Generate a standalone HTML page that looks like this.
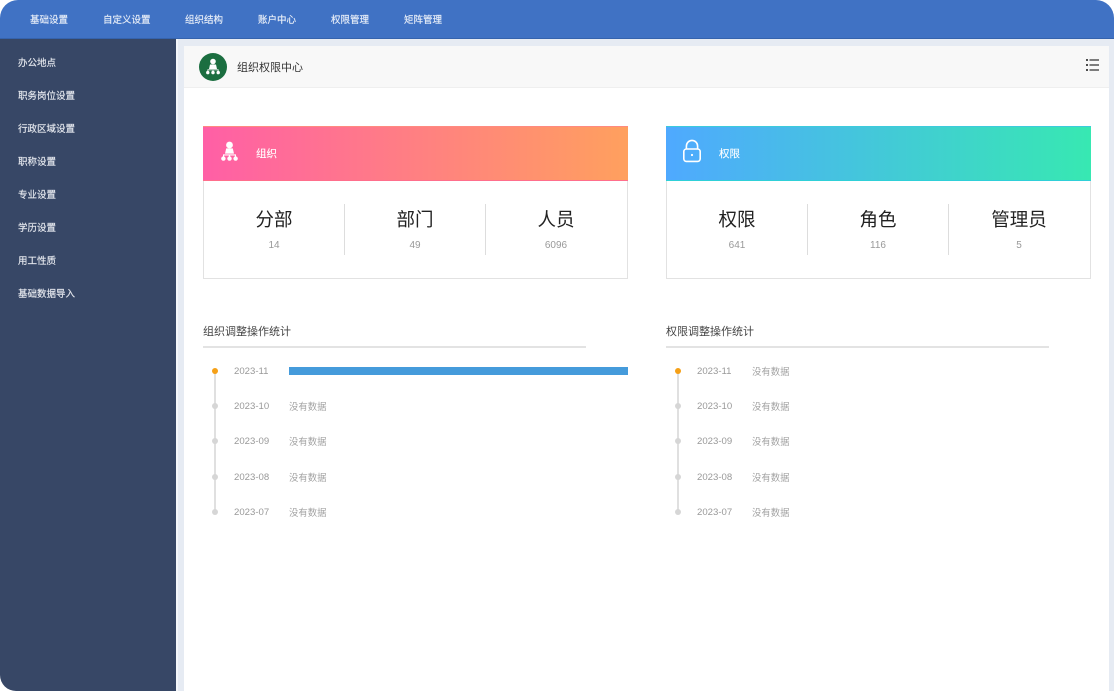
<!DOCTYPE html>
<html lang="zh"><head><meta charset="utf-8"><title>组织权限中心</title>
<style>
*{box-sizing:border-box;margin:0;padding:0}
html,body{width:1114px;height:691px;overflow:hidden;background:#fff;font-family:"Liberation Sans","Noto Sans CJK SC",sans-serif}
.a{position:absolute;white-space:nowrap}
#page{position:relative;width:1114px;height:691px;overflow:hidden;background:#fff}
#bg{left:178px;top:38px;width:936px;height:653px;background:#e6ebf3}
#top{left:0;top:0;width:1114px;height:39px;background:#4072c4;border-bottom:1px solid #3563ad;border-radius:18px 18px 0 0}
#side{left:0;top:38px;width:176px;height:653px;background:#374766;border-radius:0 0 0 16px}
#cw{left:176px;top:39px;width:2px;height:652px;background:#f4f6fa}
#main{left:184px;top:46px;width:925px;height:645px;background:#fff}
#head{left:184px;top:46px;width:925px;height:42px;background:#f8f8f8;border-bottom:1px solid #efefef}
.n{top:13.5px;font-size:9.5px;line-height:13px;color:#e8eef8;-webkit-text-stroke:.15px #e8eef8}
.s{left:18px;font-size:9.5px;line-height:13px;color:#e6e9ef;-webkit-text-stroke:.15px #e6e9ef}
.card{top:126px;width:425px;height:152.5px;background:#fff;border:1.5px solid #e2e2e2;border-top:0}
.bar{top:126px;width:425px;height:55px}
.bar1{background:linear-gradient(90deg,#ff5fa6,#ffa05e);border-top:1px solid #ff8a80;border-bottom:1.5px solid #ff6f8c}
.bar2{background:linear-gradient(90deg,#4fa9ff,#37e8b2);border-top:1px solid #3ccbdc;border-bottom:1.5px solid #2fd0d8}
.bt{top:146.5px;font-size:10.5px;line-height:14px;color:#fff;-webkit-text-stroke:.1px #fff}
.big{top:207px;width:120px;text-align:center;font-size:18.5px;line-height:25px;color:#222}
.num{top:239px;width:120px;text-align:center;font-size:10px;line-height:13px;color:#999}
.v{top:204px;width:1px;height:51px;background:#ddd}
.h2{top:325px;font-size:11px;line-height:14px;color:#444}
.ul{top:346px;width:383px;height:2px;background:#e3e3e3}
.line{width:2px;height:141px;top:371px;background:#e0e0e0}
.dot{width:6px;height:6px;border-radius:50%;background:#d6d6d6}
.d{font-size:9.6px;line-height:12px;color:#999}
.t{font-size:9.4px;line-height:12px;color:#a3a3a3}
</style></head><body>
<div id="page">
<div class="a" id="bg"></div>
<div class="a" id="main"></div>
<div class="a" id="head"></div>
<div class="a" id="cw"></div>
<div class="a" id="side"></div>
<div class="a" id="top"></div>
<div class="a n" style="left:30px">基础设置</div>
<div class="a n" style="left:103px">自定义设置</div>
<div class="a n" style="left:185px">组织结构</div>
<div class="a n" style="left:258px">账户中心</div>
<div class="a n" style="left:331px">权限管理</div>
<div class="a n" style="left:404px">矩阵管理</div>

<div class="a s" style="top:56.5px">办公地点</div>
<div class="a s" style="top:89.5px">职务岗位设置</div>
<div class="a s" style="top:122.5px">行政区域设置</div>
<div class="a s" style="top:155.5px">职称设置</div>
<div class="a s" style="top:188.5px">专业设置</div>
<div class="a s" style="top:221.5px">学历设置</div>
<div class="a s" style="top:254.5px">用工性质</div>
<div class="a s" style="top:287.5px">基础数据导入</div>

<div class="a" style="left:199px;top:53px;width:28px;height:28px;border-radius:50%;background:#1b6e40"></div>
<svg class="a" style="left:205px;top:58px" width="16" height="18" viewBox="0 0 16 18" fill="#fff"><circle cx="8" cy="3.5" r="2.8"/><path d="M5 6.5h6l1 4.5H4z"/><path d="M2.4 13.2v-1.8h11.2v1.8h-.9v-.9H8.4v.9h-.8v-.9H3.3v.9z"/><circle cx="2.8" cy="14.6" r="1.7"/><circle cx="8" cy="14.6" r="1.7"/><circle cx="13.2" cy="14.6" r="1.7"/></svg>
<div class="a" style="left:237px;top:60.5px;font-size:11px;line-height:14px;color:#333">组织权限中心</div>
<svg class="a" style="left:1085px;top:58px" width="15" height="15" viewBox="0 0 15 15"><path d="M4.5 2h9.5M4.5 7h9.5M4.5 12h9.5" stroke="#333" stroke-width="1.3"/><path d="M1 2h2M1 7h2M1 12h2" stroke="#333" stroke-width="1.7"/></svg>

<div class="a card" style="left:203px"></div>
<div class="a bar bar1" style="left:203px"></div>
<svg class="a" style="left:221px;top:141px" width="17" height="21" viewBox="0 0 17 21" fill="#fff"><circle cx="8.5" cy="4" r="3.4"/><path d="M5.2 7.4h6.6l1.2 5.2H4z"/><path d="M2 16v-2.6h13V16h-1.1v-1.5H9.1V16H7.9v-1.5H3.1V16z"/><circle cx="2.4" cy="17.6" r="2.2"/><circle cx="8.5" cy="17.6" r="2.2"/><circle cx="14.6" cy="17.6" r="2.2"/></svg>
<div class="a bt" style="left:256px">组织</div>
<div class="a big" style="left:214px">分部</div><div class="a num" style="left:214px">14</div>
<div class="a v" style="left:344px"></div>
<div class="a big" style="left:355px">部门</div><div class="a num" style="left:355px">49</div>
<div class="a v" style="left:485px"></div>
<div class="a big" style="left:496px">人员</div><div class="a num" style="left:496px">6096</div>

<div class="a card" style="left:666px"></div>
<div class="a bar bar2" style="left:666px"></div>
<svg class="a" style="left:682px;top:139px" width="20" height="24" viewBox="0 0 20 24" fill="none" stroke="#fff" stroke-width="1.6"><rect x="1.8" y="10" width="16.4" height="12.4" rx="2.6"/><path d="M4.4 10V7a5.6 5.6 0 0 1 11.2 0v3"/><circle cx="10" cy="16" r="1.1" fill="#fff" stroke="none"/></svg>
<div class="a bt" style="left:719px">权限</div>
<div class="a big" style="left:677px">权限</div><div class="a num" style="left:677px">641</div>
<div class="a v" style="left:807px"></div>
<div class="a big" style="left:818px">角色</div><div class="a num" style="left:818px">116</div>
<div class="a v" style="left:948px"></div>
<div class="a big" style="left:959px">管理员</div><div class="a num" style="left:959px">5</div>

<div class="a h2" style="left:203px">组织调整操作统计</div>
<div class="a ul" style="left:203px"></div>
<div class="a line" style="left:214px"></div>
<div class="a dot" style="left:212px;top:368px;background:#f5a017"></div>
<div class="a dot" style="left:212px;top:403px"></div>
<div class="a dot" style="left:212px;top:438px"></div>
<div class="a dot" style="left:212px;top:474px"></div>
<div class="a dot" style="left:212px;top:509px"></div>
<div class="a d" style="left:234px;top:366px">2023-11</div>
<div class="a" style="left:289px;top:367px;width:339px;height:8px;background:#459bdb"></div>
<div class="a d" style="left:234px;top:400.5px">2023-10</div><div class="a t" style="left:289px;top:400.5px">没有数据</div>
<div class="a d" style="left:234px;top:435.5px">2023-09</div><div class="a t" style="left:289px;top:435.5px">没有数据</div>
<div class="a d" style="left:234px;top:472px">2023-08</div><div class="a t" style="left:289px;top:472px">没有数据</div>
<div class="a d" style="left:234px;top:507px">2023-07</div><div class="a t" style="left:289px;top:507px">没有数据</div>

<div class="a h2" style="left:666px">权限调整操作统计</div>
<div class="a ul" style="left:666px"></div>
<div class="a line" style="left:677px"></div>
<div class="a dot" style="left:675px;top:368px;background:#f5a017"></div>
<div class="a dot" style="left:675px;top:403px"></div>
<div class="a dot" style="left:675px;top:438px"></div>
<div class="a dot" style="left:675px;top:474px"></div>
<div class="a dot" style="left:675px;top:509px"></div>
<div class="a d" style="left:697px;top:366px">2023-11</div><div class="a t" style="left:752px;top:366px">没有数据</div>
<div class="a d" style="left:697px;top:400.5px">2023-10</div><div class="a t" style="left:752px;top:400.5px">没有数据</div>
<div class="a d" style="left:697px;top:435.5px">2023-09</div><div class="a t" style="left:752px;top:435.5px">没有数据</div>
<div class="a d" style="left:697px;top:472px">2023-08</div><div class="a t" style="left:752px;top:472px">没有数据</div>
<div class="a d" style="left:697px;top:507px">2023-07</div><div class="a t" style="left:752px;top:507px">没有数据</div>
</div>
</body></html>
